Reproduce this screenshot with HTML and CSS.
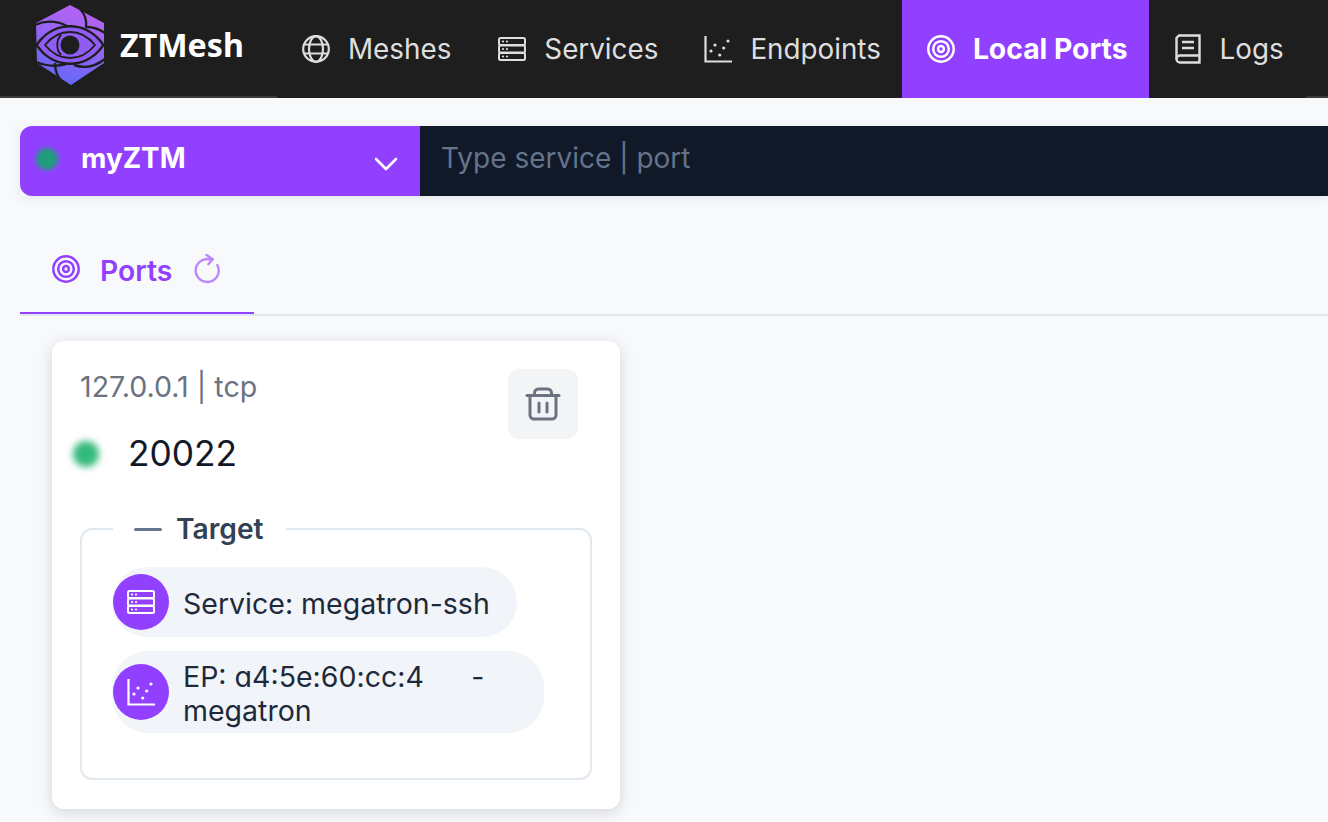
FILE: index.html
```html
<!DOCTYPE html>
<html lang="en">
<head>
<meta charset="utf-8">
<title>ZTMesh</title>
<link rel="stylesheet" href="styles.css">
</head>
<body>
<svg class="defs" width="0" height="0" aria-hidden="true">
  <defs>
    <linearGradient id="hexfill" x1="0.65" y1="0" x2="0.35" y2="1">
      <stop offset="0" stop-color="#bb62f2"/>
      <stop offset="1" stop-color="#6368f7"/>
    </linearGradient>
    <symbol id="i-globe" viewBox="0 0 28 28"><g fill="none" stroke="currentColor" stroke-width="2.200"><circle cx="14" cy="14" r="12.800"/><ellipse cx="14" cy="14" rx="7" ry="12.800"/><path d="M2 9.500h24M2 18.500h24"/></g></symbol>
    <symbol id="i-server" viewBox="0 0 28 28"><g fill="none" stroke="currentColor" stroke-width="2"><rect x="1" y="3" width="26" height="7" rx="1.500"/><rect x="1" y="10.500" width="26" height="7" rx="1.500"/><rect x="1" y="18" width="26" height="7" rx="1.500"/></g><g fill="currentColor"><circle cx="5" cy="6.500" r="1.100"/><circle cx="9" cy="6.500" r="1.100"/><circle cx="5" cy="14" r="1.100"/><circle cx="9" cy="14" r="1.100"/><circle cx="5" cy="21.500" r="1.100"/><circle cx="9" cy="21.500" r="1.100"/></g></symbol>
    <symbol id="i-chart" viewBox="0 0 28 28"><path d="M1.500 1v25.500H28" fill="none" stroke="currentColor" stroke-width="2.200"/><g fill="currentColor"><circle cx="7" cy="16" r="1.600"/><circle cx="11" cy="10" r="1.600"/><circle cx="15.700" cy="20" r="1.600"/><circle cx="19.700" cy="13" r="1.600"/><circle cx="24" cy="6" r="1.600"/></g></symbol>
    <symbol id="i-target" viewBox="0 0 28 28"><g fill="none" stroke="currentColor" stroke-width="2.500"><circle cx="14" cy="14" r="12.700"/><circle cx="14" cy="14" r="7.800"/><circle cx="14" cy="14" r="2.900"/></g></symbol>
    <symbol id="i-book" viewBox="0 0 26 30"><g fill="none" stroke="currentColor" stroke-width="2.400"><path d="M4 1.500h20.500v27H5A3.500 3.500 0 0 1 1.500 25V4Z"/><path d="M1.500 25A3.500 3.500 0 0 1 5 21.500h19.500"/></g><path d="M7 8h12M7 14h12" fill="none" stroke="currentColor" stroke-width="2.400"/></symbol>
  </defs>
</svg>

<header class="nav">
  <a class="brand">
    <svg class="logo" viewBox="0 0 68 80" aria-hidden="true">
      <path d="M34 0 68 18V58L35 80 1 58 0 18Z" fill="url(#hexfill)"/>
      <g fill="none" stroke="#1e1e1e" stroke-width="2.400">
        <path d="M44 4C49 9 51 15 50 23"/>
        <path d="M51 22C57 22 63 24 69 28"/>
        <path d="M-1 20C10 15 21 16 31 21"/>
        <path d="M0 57C10 61 20 62 30 59"/>
        <path d="M38 60C49 64 60 61 69 54"/>
        <path d="M19 58C19 66 21 72 27 78"/>
      </g>
      <path d="M-1 40C10 24 24 20 34 20S58 24 69 40C58 56 44 60 34 60S10 56 -1 40Z" fill="#1e1e1e"/>
      <path d="M2 40C12 26 24 22.500 34 22.500S56 26 66 40C56 54 44 57.500 34 57.500S12 54 2 40Z" fill="#8f5cf4"/>
      <path d="M9 40C17 30 26 27 34 27S51 30 59 40C51 50 42 53 34 53S17 50 9 40Z" fill="none" stroke="#1e1e1e" stroke-width="1.800"/>
      <path d="M25 30C20 35 20 45 25 50" fill="none" stroke="#1e1e1e" stroke-width="1.800"/>
      <circle cx="34" cy="40" r="9.500" fill="#1e1e1e"/>
    </svg>
    <span class="brand-name">ZTMesh</span>
  </a>
  <nav class="menu">
    <a class="item item-first"><svg class="ic"><use href="#i-globe"/></svg><span>Meshes</span></a>
    <a class="item"><svg class="ic"><use href="#i-server"/></svg><span>Services</span></a>
    <a class="item"><svg class="ic"><use href="#i-chart"/></svg><span>Endpoints</span></a>
    <a class="item active"><svg class="ic"><use href="#i-target"/></svg><span>Local Ports</span></a>
    <a class="item"><svg class="ic ic-book"><use href="#i-book"/></svg><span>Logs</span></a>
  </nav>
  <div class="nav-end"></div>
</header>

<main class="page">
  <div class="search">
    <div class="picker">
      <span class="picker-dot"></span>
      <span class="picker-name">myZTM</span>
      <svg class="chev" viewBox="0 0 24 14" aria-hidden="true"><path d="M2 2l10 10L22 2" fill="none" stroke="#fff" stroke-width="2.600" stroke-linecap="round" stroke-linejoin="round"/></svg>
    </div>
    <div class="query">Type service | port</div>
  </div>

  <div class="tabs">
    <div class="tab">
      <svg class="ic"><use href="#i-target"/></svg>
      <span class="tab-label">Ports</span>
      <svg class="refresh" viewBox="0 0 26 30" aria-hidden="true"><g fill="none" stroke="currentColor" stroke-width="2.400" stroke-linecap="round" stroke-linejoin="round"><path d="M18.700 5.200H15.300A11.500 11.500 0 1 0 23.300 11"/><path d="M12.500 1l6.200 4.200-4.400 5"/></g></svg>
    </div>
  </div>

  <section class="card">
    <div class="card-head">
      <div class="card-info">
        <div class="addr">127.0.0.1 | tcp</div>
        <div class="port"><span class="status"></span><span>20022</span></div>
      </div>
      <button class="del" type="button" aria-label="Delete">
        <svg viewBox="0 0 36 36" width="36" height="36" aria-hidden="true"><g fill="none" stroke="#6b7280" stroke-width="3" stroke-linecap="round" stroke-linejoin="round"><path d="M2 9.500h32"/><path d="M5 10v19a4 4 0 0 0 4 4h18a4 4 0 0 0 4-4V10"/><path d="M9.500 9V7a4 4 0 0 1 4-4h9a4 4 0 0 1 4 4v2"/><path d="M14 17v9M22 17v9"/></g></svg>
      </button>
    </div>
    <fieldset class="target">
      <legend class="legend"><span class="minus"></span><span>Target</span></legend>
      <div class="chip">
        <span class="chip-icon"><svg class="ic"><use href="#i-server"/></svg></span>
        <span class="chip-text">Service: megatron-ssh</span>
      </div>
      <div class="chip chip-wide">
        <span class="chip-icon"><svg class="ic"><use href="#i-chart"/></svg></span>
        <span class="chip-text"><span class="alt-a">EP: a4:5e:60:cc:4</span><span class="smudge">e:a1</span>-<br>megatron</span>
      </div>
    </fieldset>
  </section>
</main>
</body>
</html>
```

FILE: styles.css
```css
* { box-sizing: border-box; }
html, body { margin: 0; height: 100%; overflow: hidden; }
body {
  background: #f8f9fb;
  font-family: Inter, "Liberation Sans", sans-serif;
  color: #1e293b;
}
.defs { position: absolute; }
.ic { width: 28px; height: 28px; flex: none; }

.nav {
  display: flex;
  height: 98px;
  background: #1e1e1e;
}
.brand {
  width: 277px;
  flex: none;
  display: flex;
  align-items: flex-start;
  padding: 5px 0 0 36px;
  border-bottom: 2px solid #3a3a3a;
}
.logo { width: 68px; height: 80px; flex: none; overflow: visible; }
.brand-name {
  margin: 20px 0 0 16px;
  font-family: "Noto Sans", sans-serif;
  font-weight: 700;
  font-size: 32.2px;
  line-height: 40px;
  color: #fff;
}
.menu { display: flex; }
.item {
  display: flex;
  align-items: center;
  gap: 18px;
  padding: 0 22px 0 24px;
  font-size: 27.8px;
  color: #dedede;
}
.item-first { padding: 0 23px 0 25px; }
.item.active {
  background: #9140ff;
  color: #fff;
  font-size: 28.3px;
  font-weight: 700;
  margin-left: -1px;
  padding-left: 25px;
  gap: 18px;
  padding-right: 21px;
}
.ic-book { width: 26px; height: 30px; margin: 0 1px 0 2px; }
.nav-end { flex: 1; border-bottom: 2px solid #3a3a3a; }

.page { padding: 28px 0 0 20px; }
.search {
  display: flex;
  height: 70px;
  box-shadow: 0 2px 8px rgba(100, 116, 139, 0.14);
}
.picker {
  width: 400px;
  flex: none;
  display: flex;
  align-items: center;
  background: #9140ff;
  border-radius: 12px 0 0 12px;
  padding: 0 22px 0 16px;
  color: #fff;
}
.picker-dot {
  width: 22px;
  height: 22px;
  border-radius: 50%;
  background: #1f9d7c;
  filter: blur(2px);
  margin-top: -5px;
}
.picker-name {
  flex: 1;
  margin-left: 23px;
  font-size: 27.8px;
  font-weight: 700;
  margin-top: -6px;
}
.chev { width: 24px; height: 14px; margin-top: 6px; }
.query {
  flex: 1;
  display: flex;
  align-items: center;
  background: #111827;
  padding: 0 0 6px 21px;
  font-size: 28px;
  color: #64748b;
}

.tabs {
  display: flex;
  margin-top: 30px;
  height: 90px;
  border-bottom: 2px solid #e2e8f0;
}
.tab {
  display: flex;
  align-items: center;
  width: 234px;
  height: 88px;
  padding: 0 0 0 32px;
  border-bottom: 2px solid #9140ff;
  color: #9140ff;
  font-size: 28.3px;
  font-weight: 600;
}
.tab .ic { margin-right: 20px; }
.tab-label { margin-top: 3px; }
.refresh { width: 26px; height: 30px; margin-left: 22px; color: #bd86ff; }

.card {
  width: 568px;
  height: 468px;
  margin: 25px 0 0 32px;
  padding: 28px;
  background: #fff;
  border-radius: 12px;
  box-shadow: 0 3px 14px rgba(71, 85, 105, 0.22);
}
.card-head { display: flex; justify-content: space-between; }
.card-info { flex: 1; }
.addr {
  font-size: 28.6px;
  line-height: 36px;
  color: #6b7280;
}
.port {
  display: flex;
  align-items: center;
  margin-top: 27px;
  font-size: 35.3px;
  line-height: 44px;
  color: #111827;
}
.status {
  width: 26px;
  height: 26px;
  margin-right: 29px;
  margin-left: -7px;
  border-radius: 50%;
  background: #34b97c;
  filter: blur(3.5px);
}
.del {
  width: 70px;
  height: 70px;
  margin-right: 14px;
  padding: 0;
  border: 0;
  border-radius: 12px;
  background: #f3f4f6;
  display: flex;
  align-items: center;
  justify-content: center;
}
.target {
  width: 512px;
  height: 268px;
  margin: 36px 0 0;
  padding: 21px 30px 0 30px;
  border: 2px solid #e2e8f0;
  border-radius: 12px;
}
.legend {
  display: flex;
  align-items: center;
  gap: 14px;
  margin-left: 1px;
  padding: 0 22px 0 21px;
  font-size: 28.2px;
  font-weight: 600;
  line-height: 34px;
  color: #334155;
}
.minus { width: 28px; height: 3px; border-radius: 2px; background: #64748b; }
.chip {
  display: flex;
  align-items: center;
  width: 405px;
  min-height: 70px;
  margin-bottom: 14px;
  padding: 9px 10px 5px 1px;
  background: #f1f5f9;
  border-radius: 36px;
  font-size: 28.5px;
  line-height: 34px;
  color: #1e293b;
}
.chip-wide { width: 432px; }
.chip-icon {
  width: 56px;
  height: 56px;
  flex: none;
  margin: -4px 14px 0 0;
  display: flex;
  align-items: center;
  justify-content: center;
  border-radius: 50%;
  background: #9140ff;
  color: #fff;
}
.chip-text { white-space: nowrap; }
.alt-a { font-feature-settings: "cv11"; }
.smudge { color: transparent; letter-spacing: -1px; }
```
